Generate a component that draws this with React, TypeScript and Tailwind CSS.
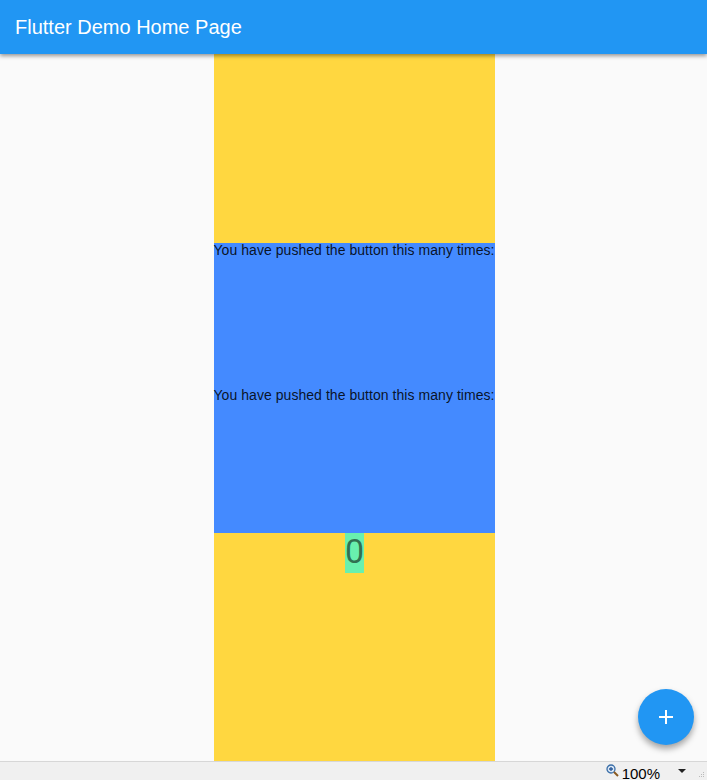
import React from "react";

export default function App() {
  return (
    <div className="relative flex h-[780px] w-[707px] flex-col overflow-hidden bg-[#fafafa]" style={{ fontFamily: '"Liberation Sans", Arial, sans-serif' }}>
      <header className="relative z-10 flex h-[54px] shrink-0 items-center bg-[#2196f3] pl-[15px] shadow-[0_2px_4px_rgba(0,0,0,0.4)]">
        <h1 className="text-[20px] leading-none text-white" style={{ fontFamily: '"Liberation Sans", Arial, sans-serif' }}>Flutter Demo Home Page</h1>
      </header>
      <main className="flex flex-1 justify-center">
        <div className="ml-[1px] flex w-[281px] flex-col">
          <div className="h-[189px] bg-[#ffd740]" />
          <div className="flex h-[290px] flex-col bg-[#448aff]">
            <div className="h-[145px] text-[14px] leading-[15px] tracking-[0.05px] text-[rgba(0,0,0,0.87)] whitespace-nowrap">You have pushed the button this many times:</div>
            <div className="h-[145px] text-[14px] leading-[15px] tracking-[0.05px] text-[rgba(0,0,0,0.87)] whitespace-nowrap">You have pushed the button this many times:</div>
          </div>
          <div className="flex flex-1 justify-center bg-[#ffd740]">
            <div className="ml-[1px] h-[40px] w-[19px] bg-[#69f0ae] text-center text-[34px] leading-[36px] text-[rgba(0,0,0,0.54)]" style={{ fontFamily: 'Roboto, "Noto Sans", sans-serif' }}>0</div>
          </div>
        </div>
      </main>
      <button className="absolute left-[638px] top-[689px] flex h-[56px] w-[56px] items-center justify-center rounded-full bg-[#2196f3] shadow-[0_4px_6px_rgba(0,0,0,0.35)]">
        <svg width="24" height="24" viewBox="0 0 24 24" fill="white">
          <path d="M19 13h-6v6h-2v-6H5v-2h6V5h2v6h6v2z" />
        </svg>
      </button>
      <footer className="flex h-[19px] shrink-0 items-center justify-end border-t border-[#d7d7d7] bg-[#f0f0f0] pr-[2px] pt-[4px] text-[15px] text-black">
        <svg width="13" height="14" viewBox="0 0 13 14" className="mr-[3px] mt-[-5px]">
          <circle cx="5" cy="5" r="4" fill="#dce8f5" stroke="#3a6ea8" strokeWidth="1.3" />
          <path d="M3 5h4M5 3v4" stroke="#2a5a9a" strokeWidth="1.3" />
          <path d="M8 8l4 4" stroke="#8a5a20" strokeWidth="2" />
        </svg>
        <span className="leading-none" style={{ fontFamily: '"Liberation Sans", Arial, sans-serif' }}>100%</span>
        <svg width="8" height="5" viewBox="0 0 8 5" className="ml-[18px] mt-[-3px]">
          <path d="M0 0h8L4 4z" fill="#222" />
        </svg>
        <svg width="6" height="6" viewBox="0 0 6 6" className="ml-[13px] mt-[4px]">
          <rect x="4" y="0" width="1" height="1" fill="#bbb" />
          <rect x="2" y="2" width="1" height="1" fill="#bbb" />
          <rect x="4" y="2" width="1" height="1" fill="#bbb" />
          <rect x="0" y="4" width="1" height="1" fill="#bbb" />
          <rect x="2" y="4" width="1" height="1" fill="#bbb" />
          <rect x="4" y="4" width="1" height="1" fill="#bbb" />
        </svg>
      </footer>
    </div>
  );
}
